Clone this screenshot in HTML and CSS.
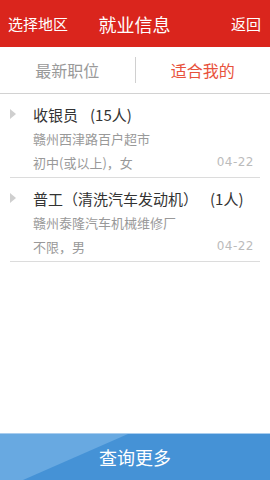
FILE: index.html
```html
<!DOCTYPE html>
<html lang="zh">
<head>
<meta charset="utf-8">
<link rel="stylesheet" href="styles.css">
</head>
<body>
<div class="page">
  <header class="topbar">
    <span class="side left">选择地区</span>
    <span class="title">就业信息</span>
    <span class="side right">返回</span>
  </header>
  <nav class="tabs">
    <div class="tab">最新职位</div>
    <div class="divider"></div>
    <div class="tab active">适合我的</div>
  </nav>
  <ul class="list">
    <li class="item">
      <div class="row title-row"><span class="arrow"></span><span class="name">收银员</span><span class="count">(15人)</span></div>
      <div class="row sub">赣州西津路百户超市</div>
      <div class="row sub meta"><span>初中(或以上)，女</span><span class="date">04-22</span></div>
    </li>
    <li class="item">
      <div class="row title-row"><span class="arrow"></span><span class="name">普工（清洗汽车发动机）</span><span class="count">(1人)</span></div>
      <div class="row sub">赣州泰隆汽车机械维修厂</div>
      <div class="row sub meta"><span>不限，男</span><span class="date">04-22</span></div>
    </li>
  </ul>
  <button class="more"><span class="more-label">查询更多</span></button>
</div>
</body>
</html>
```

FILE: styles.css
```css
* { box-sizing: border-box; }
html, body { margin: 0; padding: 0; }
body {
  font-family: "Noto Sans CJK SC", "Noto Sans", "Liberation Sans", sans-serif;
  background: #fff;
}
.page {
  width: 270px;
  height: 480px;
  display: flex;
  flex-direction: column;
  overflow: hidden;
}
.topbar {
  height: 47px;
  background: #da251d;
  color: #fff;
  display: grid;
  grid-template-columns: 1fr auto 1fr;
  align-items: center;
  padding: 0 9px 0 8px;
}
.topbar .side { font-size: 15px; line-height: 20px; }
.topbar .right { justify-self: end; }
.topbar .title { font-size: 18px; line-height: 22px; }
.tabs {
  height: 47px;
  display: flex;
  align-items: center;
  border-bottom: 1px solid #d2d2d2;
}
.tab {
  flex: 1;
  text-align: center;
  font-size: 16px;
  color: #999;
  line-height: 22px;
}
.tab.active { color: #e8523c; }
.divider {
  width: 1px;
  height: 26px;
  background: #d0d0d0;
}
.list {
  list-style: none;
  margin: 0;
  padding: 0;
  flex: 1;
}
.item {
  margin: 0 10px;
  padding: 8px 6px 3px 0;
  border-bottom: 1px solid #dcdcdc;
}
.row {
  height: 24px;
  display: flex;
  align-items: center;
}
.title-row { font-size: 15px; color: #333; }
.arrow {
  width: 0;
  height: 0;
  border-left: 6px solid #cfcfcf;
  border-top: 5px solid transparent;
  border-bottom: 5px solid transparent;
  margin-right: 17px;
}
.count { margin-left: 12px; }
.sub {
  padding-left: 23px;
  font-size: 13px;
  color: #999;
}
.meta { justify-content: space-between; }
.date { font-size: 12px; color: #bbb; font-family: "DejaVu Sans", sans-serif; letter-spacing: 0.5px; }
.more {
  position: relative;
  height: 47px;
  width: 100%;
  border: 0;
  border-top: 1px solid #a9cdee;
  background: #4592d6;
  color: #fff;
  font-family: inherit;
  font-size: 18px;
  padding: 0;
  overflow: hidden;
}
.more::before {
  content: "";
  position: absolute;
  left: 0;
  top: 0;
  width: 130px;
  height: 100%;
  background: #68a9e1;
  clip-path: polygon(0 0, 128px 0, 23px 100%, 0 100%);
}
.more-label { position: relative; }
```
